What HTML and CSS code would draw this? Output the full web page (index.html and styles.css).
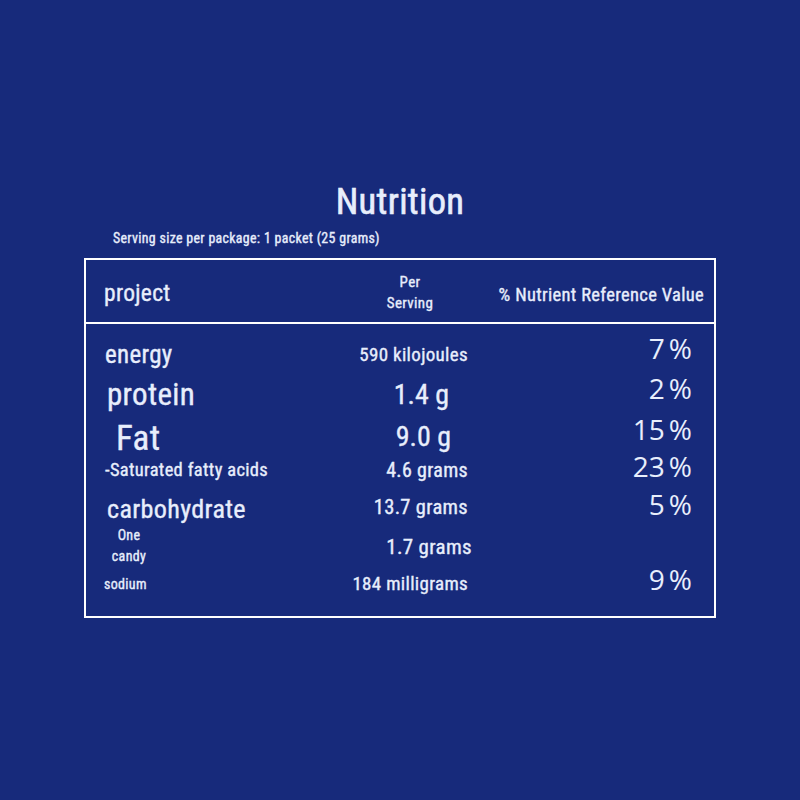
FILE: index.html
```html
<!DOCTYPE html>
<html lang="en">
<head>
<meta charset="utf-8">
<title>Nutrition</title>
<link rel="stylesheet" href="styles.css">
</head>
<body>
<main class="panel">
  <h1 class="title">Nutrition</h1>
  <p class="serving">Serving size per package: 1 packet (25 grams)</p>
  <section class="table">
    <div class="head">
      <div class="h-project">project</div>
      <div class="h-per">Per<br>Serving</div>
      <div class="h-nrv">% Nutrient Reference Value</div>
    </div>
    <div class="body">
      <div class="row r1">
        <div class="label l-energy">energy</div>
        <div class="val v-energy">590 kilojoules</div>
        <div class="pct">7<span class="sign">%</span></div>
      </div>
      <div class="row r2">
        <div class="label l-protein">protein</div>
        <div class="val v-big v-protein">1.4 g</div>
        <div class="pct">2<span class="sign">%</span></div>
      </div>
      <div class="row r3">
        <div class="label l-fat">Fat</div>
        <div class="val v-big v-fat">9.0 g</div>
        <div class="pct">15<span class="sign">%</span></div>
      </div>
      <div class="row r4">
        <div class="label l-sat">-Saturated fatty acids</div>
        <div class="val v-sat">4.6 grams</div>
        <div class="pct">23<span class="sign">%</span></div>
      </div>
      <div class="row r5">
        <div class="label l-carb">carbohydrate</div>
        <div class="val v-carb">13.7 grams</div>
        <div class="pct">5<span class="sign">%</span></div>
      </div>
      <div class="row r6">
        <div class="label l-candy">One<br>candy</div>
        <div class="val v-candy">1.7 grams</div>
        <div class="pct"></div>
      </div>
      <div class="row r7">
        <div class="label l-sodium">sodium</div>
        <div class="val v-sodium">184 milligrams</div>
        <div class="pct">9<span class="sign">%</span></div>
      </div>
    </div>
  </section>
</main>
</body>
</html>
```

FILE: styles.css
```css
html, body {
  margin: 0;
  padding: 0;
  background: #172a7b;
}
body {
  width: 800px;
  height: 800px;
  color: #e8eefc;
  font-family: "Roboto Condensed", "DejaVu Sans Condensed", sans-serif;
  font-weight: 400;
  letter-spacing: 0.02em;
  -webkit-text-stroke: 0.35px #e8eefc;
}
.panel {
  width: 632px;
  margin: 0 0 0 84px;
  padding-top: 181px;
}
.title {
  margin: 0;
  text-align: center;
  font-size: 36.5px;
  line-height: 42px;
  font-weight: 400;
  -webkit-text-stroke: 0.6px #e8eefc;
}
.serving {
  margin: 0;
  padding-left: 29px;
  font-size: 13.9px;
  line-height: 20px;
  height: 35px;
  box-sizing: border-box;
  padding-top: 5px;
}
.table {
  border: 2px solid #ffffff;
  box-sizing: border-box;
  width: 632px;
}
.head {
  display: grid;
  grid-template-columns: 276px 60px 1fr;
  align-items: center;
  height: 62px;
  padding: 0 10px 0 18px;
  border-bottom: 2px solid #ffffff;
}
.h-project {
  font-size: 23.5px;
  padding-top: 3px;
}
.h-per {
  text-align: center;
  font-size: 15px;
  line-height: 21px;
  padding-top: 4px;
}
.h-nrv {
  text-align: right;
  font-size: 18.5px;
  padding-top: 7px;
}
.body {
  padding: 8px 22px 16px 18px;
}
.row {
  display: grid;
  grid-template-columns: 240px 124px 1fr;
  align-items: center;
}
.r1 { height: 40px; }
.r2 { height: 41px; }
.r3 { height: 37px; }
.r4 { height: 36px; }
.r5 { height: 39px; }
.r6 { height: 37px; }
.r7 { height: 38px; }
.label { white-space: nowrap; }
.val { text-align: right; white-space: nowrap; }
.pct {
  text-align: right;
  font-family: "Open Sans", "DejaVu Sans", sans-serif;
  font-size: 28px;
  font-weight: 400;
  line-height: 32px;
  letter-spacing: 0;
  margin-bottom: 12px;
  -webkit-text-stroke: 0;
}
.sign { margin-left: 4px; }
.r2 .pct { margin-bottom: 16px; }
.r3 .pct { margin-bottom: 19px; }
.r4 .pct { margin-bottom: 14px; }
.r5 .pct { margin-bottom: 4px; }
.r7 .pct { margin-bottom: 4px; }
.l-energy { font-size: 25px; padding-left: 1px; }
.l-protein { font-size: 31px; padding-left: 3px; margin-bottom: 3px; }
.l-fat { font-size: 35px; padding-left: 12px; }
.l-sat { font-size: 18.5px; padding-left: 1px; margin-bottom: 6px; }
.l-carb { font-size: 26.2px; padding-left: 3px; padding-top: 6px; }
.l-candy {
  font-size: 14px;
  line-height: 21px;
  width: 50px;
  text-align: center;
  margin-bottom: 8px;
}
.l-sodium { font-size: 14px; padding-top: 6px; }
.v-energy { font-size: 19px; }
.v-big { font-size: 28px; letter-spacing: 0; }
.v-protein { padding-right: 19px; margin-bottom: 3px; }
.v-fat { padding-right: 17px; margin-bottom: 4px; }
.v-sat { font-size: 20px; margin-bottom: 6px; }
.v-carb { font-size: 20.5px; padding-top: 2px; }
.v-candy { font-size: 21px; margin-right: -4px; margin-bottom: 6px; }
.v-sodium { font-size: 19px; padding-top: 4px; }
```
